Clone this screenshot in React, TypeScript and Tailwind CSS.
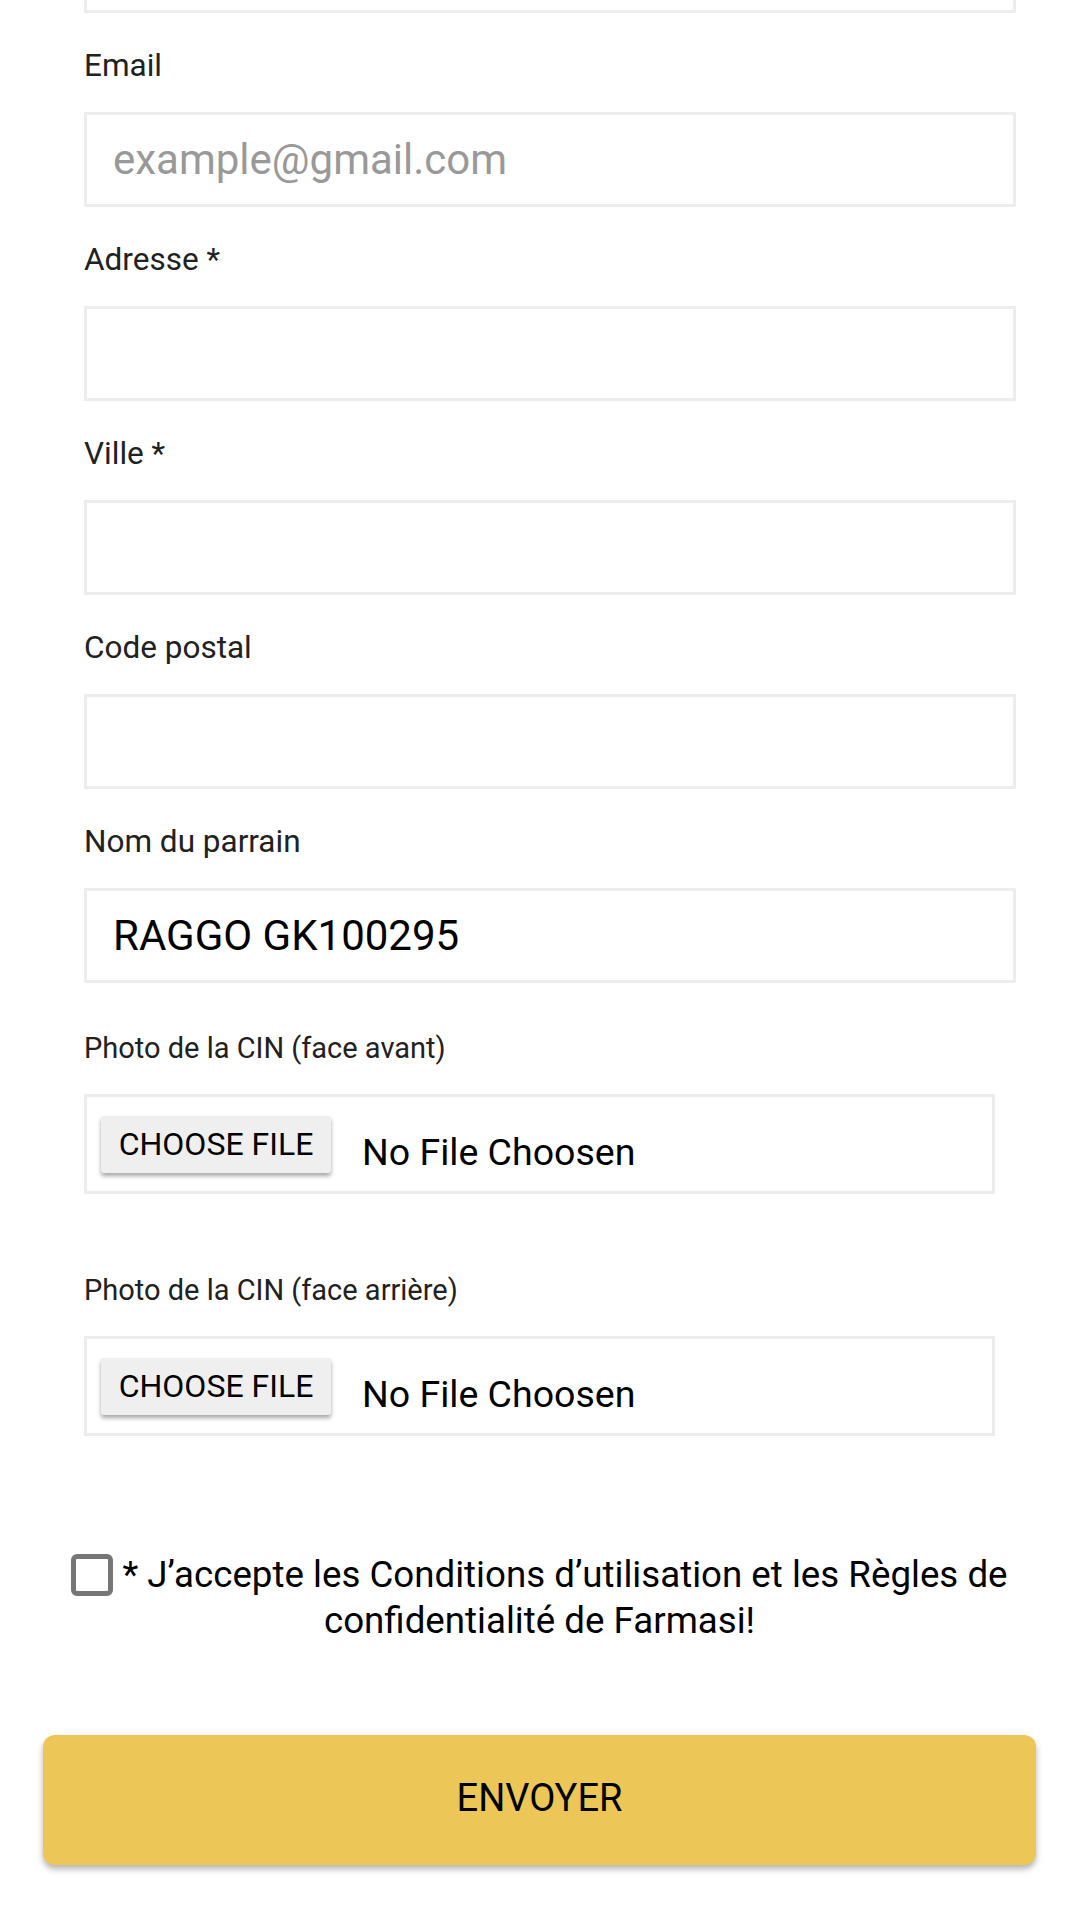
import React from "react";

function Field({ label, placeholder, value }: { label: string; placeholder?: string; value?: string }) {
  return (
    <div className="mt-[35px] flex flex-col">
      <label className="text-[31.5px] leading-[36px] text-[#212121]">{label}</label>
      <input
        readOnly
        defaultValue={value}
        placeholder={placeholder}
        className="mt-[28px] box-border h-[95px] w-[932px] border-[3px] border-[#ededed] bg-white pl-[26px] text-[42px] text-black outline-none placeholder:text-[#999999]"
        style={{ fontFamily: "Roboto, sans-serif" }}
      />
    </div>
  );
}

function FileField({ label, first }: { label: string; first?: boolean }) {
  return (
    <div className={first ? "mt-[49px] flex flex-col" : "mt-[80px] flex flex-col"}>
      <label className="text-[29px] leading-[32px] text-[#212121]">{label}</label>
      <div className="mt-[30px] box-border flex h-[100px] w-[911px] items-center border-[3px] border-[#ededed] bg-white pl-[14px]">
        <button className="h-[57px] w-[230px] rounded-[3px] bg-[#efefef] text-[32px] leading-none text-black shadow-[0_3px_4px_rgba(0,0,0,0.35)]">
          CHOOSE FILE
        </button>
        <span className="ml-[31px] pt-[18px] text-[37.5px] leading-none text-black">No File Choosen</span>
      </div>
    </div>
  );
}

export default function App() {
  return (
    <div className="min-h-[1919px] w-[1079px] bg-white px-[43px]" style={{ fontFamily: "Roboto, 'Noto Sans', sans-serif" }}>
      <div className="pl-[41px]">
        <div className="box-border h-[13px] w-[932px] border-[3px] border-t-0 border-[#ededed]" />
        <Field label="Email" placeholder="example@gmail.com" />
        <Field label="Adresse *" />
        <Field label="Ville *" />
        <Field label="Code postal" />
        <Field label="Nom du parrain" value="RAGGO GK100295" />
        <FileField first label="Photo de la CIN (face avant)" />
        <FileField label="Photo de la CIN (face arrière)" />
      </div>
      <p className="mt-[109px] text-center text-[36.7px] leading-[46px] text-black">
        <span className="mr-[9px] inline-block h-[42px] w-[42px] translate-y-[9px] rounded-[6px] border-[5px] border-[#767676] align-baseline" />
        * J’accepte les Conditions d’utilisation et les Règles de confidentialité de Farmasi!
      </p>
      <button className="mt-[91px] flex h-[130px] w-full items-center justify-center rounded-[12px] bg-[#ecc757] pb-[4px] text-[38px] font-normal text-black shadow-[0_4px_6px_rgba(0,0,0,0.3)]">
        ENVOYER
      </button>
    </div>
  );
}
